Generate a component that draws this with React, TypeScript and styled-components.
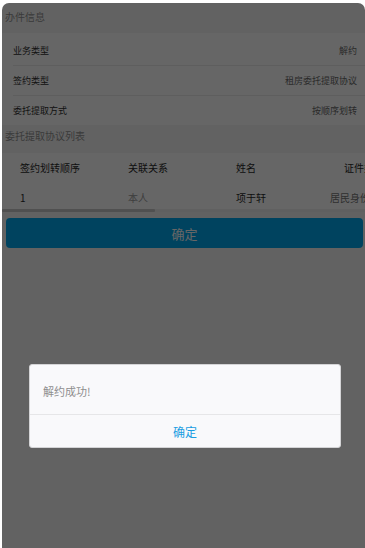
import styled, { createGlobalStyle } from 'styled-components';

const GlobalStyle = createGlobalStyle`
  html, body {
    margin: 0;
    padding: 0;
    background: #ffffff;
    overflow: hidden;
  }
  body {
    font-family: "Noto Sans CJK SC", "Noto Sans", "Liberation Sans", sans-serif;
  }
`;

const Screen = styled.div`
  position: relative;
  margin: 3px 0 0 2px;
  width: 363px;
  height: 545px;
  border-radius: 7px 7px 0 0;
  overflow: hidden;
  background: #f6f6f6;
`;

const SectionTitle = styled.div<{ h: number; lh: number }>`
  height: ${p => p.h}px;
  line-height: ${p => p.lh}px;
  padding-left: 3px;
  font-size: 10px;
  color: #929292;
`;

const InfoList = styled.div`
  background: #ffffff;
  padding: 3px 0 0 11px;
`;

const InfoRow = styled.div`
  display: flex;
  justify-content: space-between;
  align-items: center;
  height: 29px;
  padding-right: 8px;
  font-size: 9px;
  border-bottom: 1px solid #ececec;

  &:last-child {
    border-bottom: none;
  }
`;

const InfoLabel = styled.span`
  color: #303030;
`;

const InfoValue = styled.span`
  color: #6a6a6a;
`;

const Table = styled.div`
  background: #ffffff;
  overflow: hidden;
`;

const TableRow = styled.div<{ h: number; top?: number }>`
  display: flex;
  height: ${p => p.h}px;
  box-sizing: border-box;
  padding-top: ${p => p.top ?? 0}px;
  align-items: center;
  padding-left: 18px;
  white-space: nowrap;
`;

const Cell = styled.div<{ tone?: 'dark' | 'light' | 'mid'; shift?: number }>`
  flex: 0 0 108px;
  font-size: 10px;
  margin-left: ${p => p.shift ?? 0}px;
  color: ${p => (p.tone === 'light' ? '#9a9a9a' : p.tone === 'mid' ? '#777777' : '#2a2a2a')};
`;

const ScrollTrack = styled.div`
  height: 3px;
  background: #f0f0f0;
`;

const ScrollThumb = styled.div`
  height: 3px;
  background: #c9c9c9;
  border-radius: 1px;
`;

const SubmitButton = styled.div`
  margin: 6px 2px 0 4px;
  height: 30px;
  border-radius: 4px;
  background: #00a9ee;
  color: #ffffff;
  font-size: 13px;
  display: flex;
  align-items: center;
  justify-content: center;
`;

const Mask = styled.div`
  position: absolute;
  inset: 0;
  background: rgba(0, 0, 0, 0.6);
`;

const Dialog = styled.div`
  position: absolute;
  left: 27px;
  top: 361px;
  width: 310px;
  background: #f9f9fb;
  border: 1px solid #d4d4d6;
  border-radius: 3px;
`;

const DialogBody = styled.div`
  height: 50px;
  padding: 3px 0 0 13px;
  display: flex;
  align-items: center;
  box-sizing: border-box;
  font-size: 11px;
  color: #8e8e8e;
  border-bottom: 1px solid #e6e6e8;
`;

const DialogAction = styled.div`
  height: 32px;
  display: flex;
  align-items: center;
  justify-content: center;
  font-size: 12px;
  color: #1a9de2;
`;

export default function App() {
  return (
    <>
      <GlobalStyle />
      <Screen>
        <SectionTitle h={30} lh={28}>办件信息</SectionTitle>
        <InfoList>
          <InfoRow>
            <InfoLabel>业务类型</InfoLabel>
            <InfoValue>解约</InfoValue>
          </InfoRow>
          <InfoRow>
            <InfoLabel>签约类型</InfoLabel>
            <InfoValue>租房委托提取协议</InfoValue>
          </InfoRow>
          <InfoRow>
            <InfoLabel>委托提取方式</InfoLabel>
            <InfoValue>按顺序划转</InfoValue>
          </InfoRow>
        </InfoList>
        <SectionTitle h={28} lh={22}>委托提取协议列表</SectionTitle>
        <Table>
          <TableRow h={29}>
            <Cell>签约划转顺序</Cell>
            <Cell>关联关系</Cell>
            <Cell>姓名</Cell>
            <Cell>证件类型</Cell>
          </TableRow>
          <TableRow h={27} top={4}>
            <Cell>1</Cell>
            <Cell tone="light">本人</Cell>
            <Cell>项于轩</Cell>
            <Cell tone="mid" shift={-14}>居民身份证</Cell>
          </TableRow>
          <ScrollTrack>
            <ScrollThumb style={{ width: '153px' }} />
          </ScrollTrack>
        </Table>
        <SubmitButton>确定</SubmitButton>
        <Mask />
        <Dialog>
          <DialogBody>解约成功!</DialogBody>
          <DialogAction>确定</DialogAction>
        </Dialog>
      </Screen>
    </>
  );
}
